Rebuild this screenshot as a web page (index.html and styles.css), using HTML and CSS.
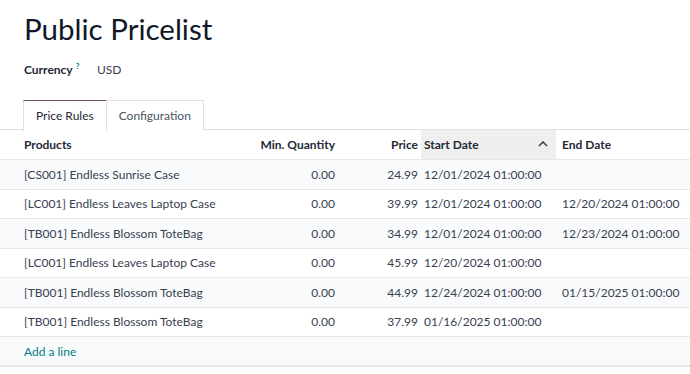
FILE: index.html
```html
<!doctype html>
<html lang="en">
<head>
    <meta charset="UTF-8">
    <title>Public Pricelist</title>
    <link rel="stylesheet" href="styles.css">
</head>
<body>
<div class="sheet">
    <h1 class="title">Public Pricelist</h1>
    <div class="field">
        <span class="label">Currency<sup class="help">?</sup></span>
        <span class="value">USD</span>
    </div>
    <ul class="tabs">
        <li class="tab active">Price Rules</li>
        <li class="tab">Configuration</li>
    </ul>
    <table class="rules">
        <thead>
        <tr>
            <th class="c-product">Products</th>
            <th class="c-qty num">Min. Quantity</th>
            <th class="c-price num">Price</th>
            <th class="c-start sorted">Start Date<span class="caret"><svg width="10" height="6" viewBox="0 0 10 6"><path d="M1 5 L5 1 L9 5" fill="none" stroke="#444" stroke-width="1.6"/></svg></span></th>
            <th class="c-end">End Date</th>
        </tr>
        </thead>
        <tbody>
        <tr>
            <td>[CS001] Endless Sunrise Case</td>
            <td class="num">0.00</td>
            <td class="num">24.99</td>
            <td>12/01/2024 01:00:00</td>
            <td></td>
        </tr>
        <tr>
            <td>[LC001] Endless Leaves Laptop Case</td>
            <td class="num">0.00</td>
            <td class="num">39.99</td>
            <td>12/01/2024 01:00:00</td>
            <td>12/20/2024 01:00:00</td>
        </tr>
        <tr>
            <td>[TB001] Endless Blossom ToteBag</td>
            <td class="num">0.00</td>
            <td class="num">34.99</td>
            <td>12/01/2024 01:00:00</td>
            <td>12/23/2024 01:00:00</td>
        </tr>
        <tr>
            <td>[LC001] Endless Leaves Laptop Case</td>
            <td class="num">0.00</td>
            <td class="num">45.99</td>
            <td>12/20/2024 01:00:00</td>
            <td></td>
        </tr>
        <tr>
            <td>[TB001] Endless Blossom ToteBag</td>
            <td class="num">0.00</td>
            <td class="num">44.99</td>
            <td>12/24/2024 01:00:00</td>
            <td>01/15/2025 01:00:00</td>
        </tr>
        <tr>
            <td>[TB001] Endless Blossom ToteBag</td>
            <td class="num">0.00</td>
            <td class="num">37.99</td>
            <td>01/16/2025 01:00:00</td>
            <td></td>
        </tr>
        <tr class="add-row">
            <td colspan="5"><a class="add-line">Add a line</a></td>
        </tr>
        </tbody>
    </table>
</div>
</body>
</html>
```

FILE: styles.css
```css
* {
    padding: 0;
    margin: 0;
    box-sizing: border-box;
}

body {
    background: #fff;
    font-family: Lato, "Noto Sans", sans-serif;
    font-size: 12px;
    color: #374151;
}

.sheet {
    width: 690px;
}

.title {
    padding: 12px 0 0 24px;
    height: 58px;
    font-size: 29.5px;
    font-weight: 400;
    line-height: 34px;
    color: #111827;
}

.field {
    display: flex;
    align-items: baseline;
    height: 42px;
    padding: 3px 0 0 24px;
}

.label {
    width: 73px;
    font-weight: 700;
    color: #1f2937;
}

.help {
    font-size: 8px;
    color: #017e84;
    margin-left: 3px;
}

.value {
    color: #374151;
}

.tabs {
    display: flex;
    list-style: none;
    padding-left: 24px;
    border-bottom: 1px solid #dee2e6;
    height: 30px;
}

.tab {
    height: 30px;
    padding: 0 12px;
    line-height: 29px;
    border: 1px solid #dee2e6;
    border-bottom: none;
    color: #4b5563;
    margin-left: -1px;
    background: #fff;
}

.tab.active {
    border-top: 1px solid #714b67;
    height: 31px;
    color: #1f2937;
}

.rules {
    width: 690px;
    border-collapse: collapse;
    table-layout: fixed;
}

.rules th,
.rules td {
    height: 29.5px;
    padding: 0 3px;
    text-align: left;
    white-space: nowrap;
    overflow: hidden;
    border-bottom: 1px solid #e5e7eb;
}

.rules th {
    font-weight: 700;
    color: #1f2937;
}

.rules .num {
    text-align: right;
}

.rules th:first-child,
.rules td:first-child {
    padding-left: 24px;
}

.c-product { width: 228px; }
.c-qty { width: 110px; }
.c-price { width: 83px; }
.c-start { width: 135px; }
.c-end { width: 134px; }

.rules th.c-end,
.rules td:nth-child(5) {
    padding-left: 6px;
}

.rules th.sorted {
    background: #efefef;
    position: relative;
}

.caret {
    position: absolute;
    right: 8px;
    top: 11px;
    line-height: 0;
}

.rules tbody tr:nth-child(odd) td {
    background: #f9fafb;
}

.add-row td {
    border-bottom: 2px solid #e5e7eb;
}

.add-line {
    color: #017e84;
    cursor: pointer;
}
```
